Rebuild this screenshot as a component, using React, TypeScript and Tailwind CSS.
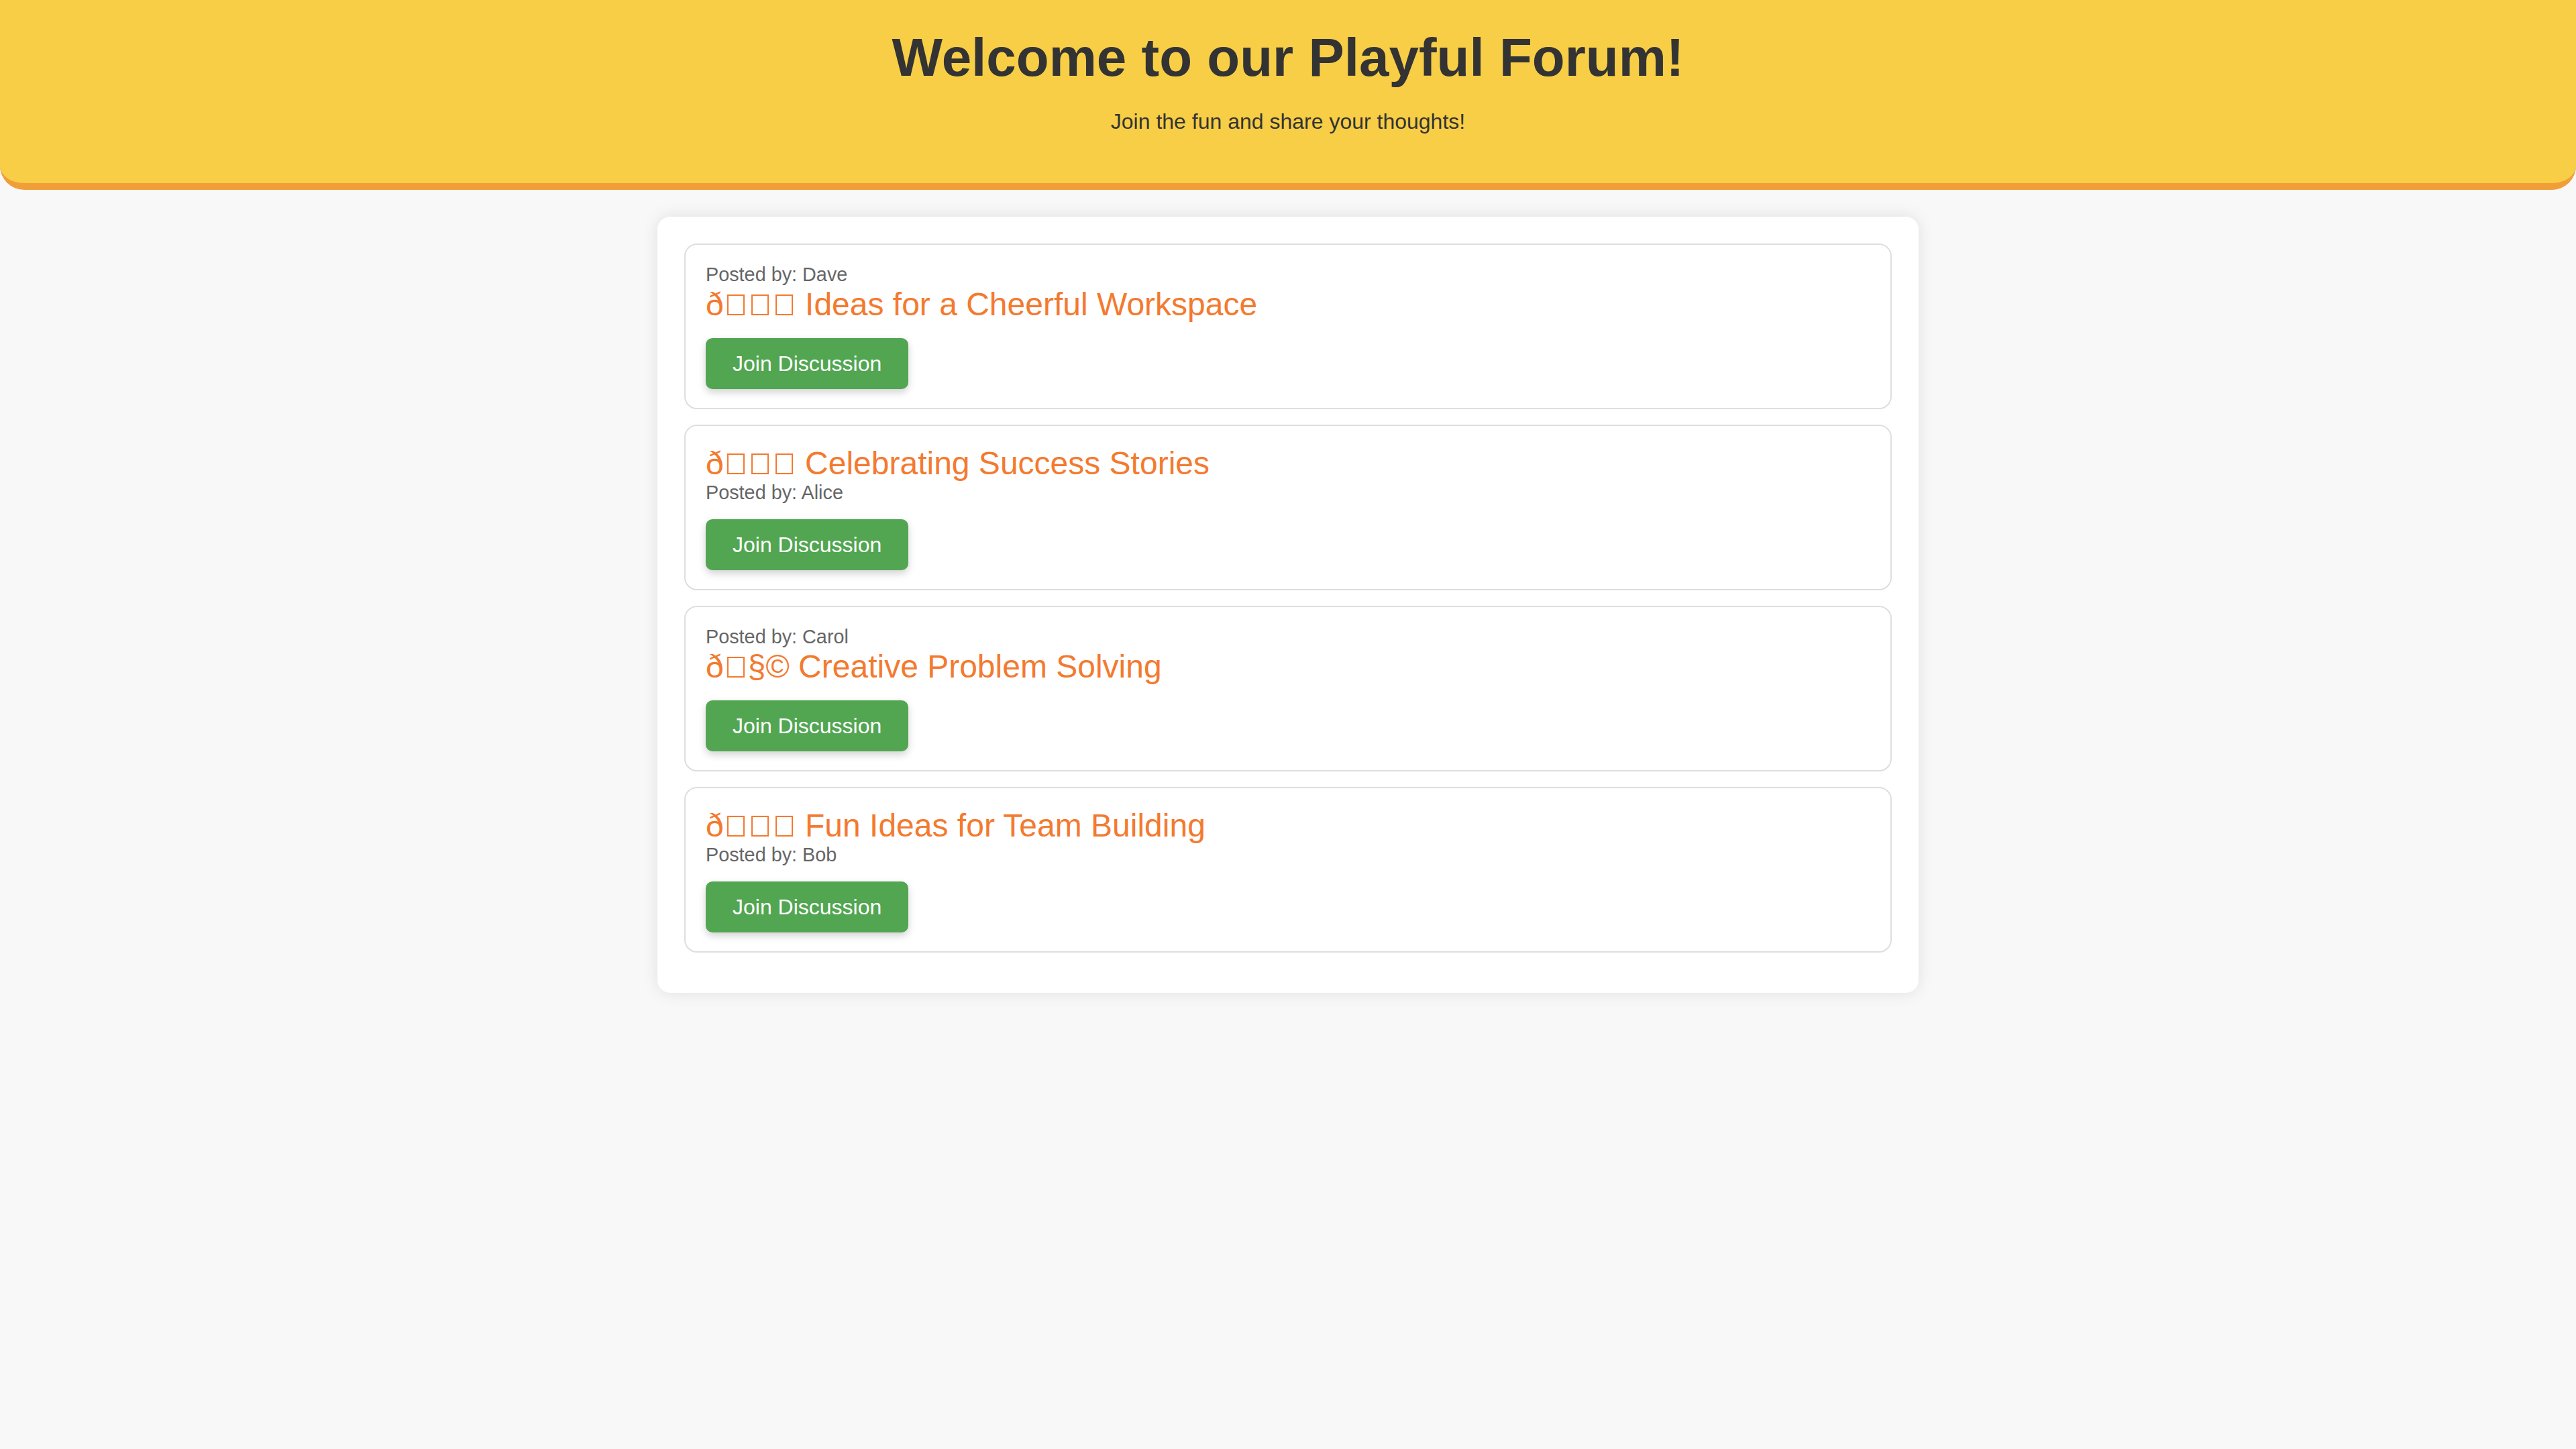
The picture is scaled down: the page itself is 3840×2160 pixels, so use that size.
import React from "react";

type Post = { lead: string; missing: string[]; rest: string; author: string; authorFirst: boolean };

const posts: Post[] = [
  { lead: "\u00F0", missing: ["\u009F", "\u008C", "\u0088"], rest: " Ideas for a Cheerful Workspace", author: "Dave", authorFirst: true },
  { lead: "\u00F0", missing: ["\u009F", "\u008E", "\u0089"], rest: " Celebrating Success Stories", author: "Alice", authorFirst: false },
  { lead: "\u00F0", missing: ["\u009F"], rest: "\u00A7\u00A9 Creative Problem Solving", author: "Carol", authorFirst: true },
  { lead: "\u00F0", missing: ["\u009F", "\u008E", "\u0088"], rest: " Fun Ideas for Team Building", author: "Bob", authorFirst: false },
];

function Tofu() {
  return (
    <span
      aria-hidden="true"
      className="inline-block w-[26px] h-[31px] mx-[5px] border-2 border-[#f37a2f] align-baseline"
    />
  );
}

function Card({ post }: { post: Post }) {
  const posted = (
    <p className="text-[28.8px] leading-[33px] text-[#666]">Posted by: {post.author}</p>
  );
  const title = (
    <h2 className="text-[48px] leading-[55px] text-[#f37a2f] font-normal">
      {post.lead}
      {post.missing.map((_, i) => (
        <Tofu key={i} />
      ))}
      {post.rest}
    </h2>
  );
  return (
    <div className="border-2 border-[#dedede] rounded-[19px] py-[28px] px-[30px] bg-white">
      {post.authorFirst ? (
        <>
          {posted}
          {title}
        </>
      ) : (
        <>
          {title}
          {posted}
        </>
      )}
      <button className="mt-[23px] h-[76px] px-[40px] inline-flex items-center bg-[#52a652] text-white text-[32px] leading-[37px] rounded-[10px] shadow-[0_5px_12px_rgba(0,0,0,0.18)]">
        Join Discussion
      </button>
    </div>
  );
}

export default function App() {
  return (
    <div className="min-h-screen bg-[#f8f8f8] font-['Liberation_Sans',Arial,sans-serif] pb-[40px]">
      <header className="bg-[#f7ce46] border-b-[10px] border-[#f19e38] rounded-b-[36px] text-center pt-[40px] pb-[73px] text-[#333]">
        <h1 className="text-[80px] font-bold leading-[92px]">Welcome to our Playful Forum!</h1>
        <p className="mt-[31px] text-[32px] leading-[37px]">Join the fun and share your thoughts!</p>
      </header>
      <main className="mx-auto mt-[40px] w-[1880px] bg-white rounded-[19px] shadow-[0_0_24px_rgba(0,0,0,0.1)] pt-[40px] px-[40px] pb-[60px] flex flex-col gap-[23px]">
        {posts.map((p) => (
          <Card key={p.author} post={p} />
        ))}
      </main>
    </div>
  );
}
